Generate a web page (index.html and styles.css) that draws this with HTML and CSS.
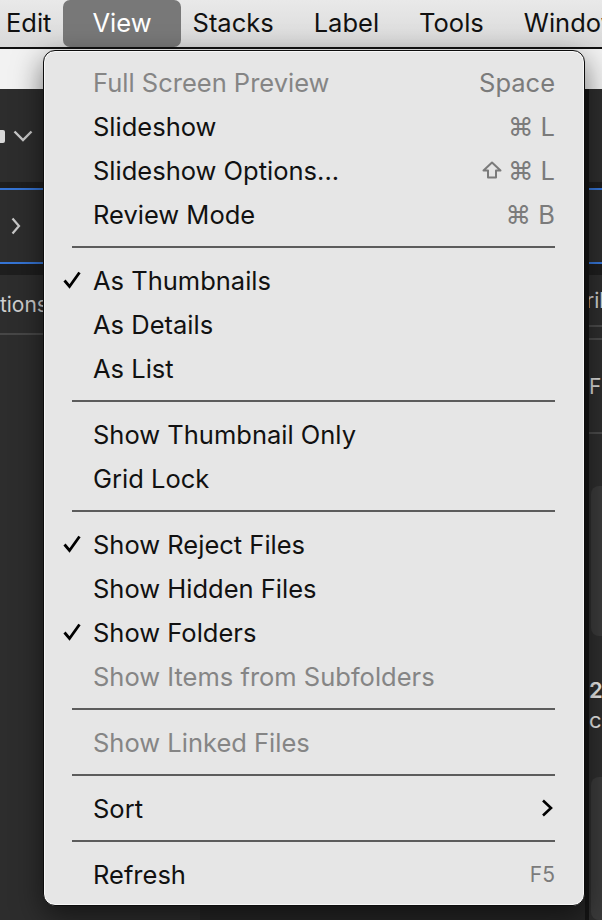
FILE: index.html
```html
<!DOCTYPE html>
<html>
<head>
<meta charset="utf-8">
<link rel="stylesheet" href="styles.css">
</head>
<body>
<div class="menubar">
  <span class="mb-item">Edit</span>
  <span class="mb-item active">View</span>
  <span class="mb-item">Stacks</span>
  <span class="mb-item">Label</span>
  <span class="mb-item">Tools</span>
  <span class="mb-item">Window</span>
</div>
<div class="window">
  <div class="toolbar"></div>
  <div class="panes">
    <div class="pane left">
      <div class="p-head">
        <span class="p-glyph"></span>
        <svg class="p-down" width="20" height="12" viewBox="0 0 20 12"><path d="M1.5 1.5 L10 10 L18.5 1.5" fill="none" stroke="#c8c8c8" stroke-width="2.4"/></svg>
      </div>
      <div class="p-band blue-b"></div>
      <div class="p-row">
        <svg class="p-right" width="10" height="18" viewBox="0 0 10 18"><path d="M1.5 1.5 L8 9 L1.5 16.5" fill="none" stroke="#c8c8c8" stroke-width="2.2"/></svg>
      </div>
      <div class="p-band blue-t"></div>
      <div class="p-label">Options</div>
      <div class="p-rest"></div>
    </div>
    <div class="pane center"></div>
    <div class="pane right">
      <div class="r-head"></div>
      <div class="p-band blue-b"></div>
      <div class="r-row"></div>
      <div class="p-band blue-t"></div>
      <div class="r-label">ril</div>
      <div class="r-gap"></div>
      <div class="r-label2">Fil</div>
      <div class="r-space1"></div>
      <div class="r-card c1"></div>
      <div class="r-info">
        <span class="r-num">2</span>
        <span class="r-sub">c</span>
      </div>
      <div class="r-card c2"></div>
    </div>
  </div>
</div>

<div class="menu">
  <div class="mi disabled"><span class="chk"></span><span class="lbl">Full Screen Preview</span><span class="sc">Space</span></div>
  <div class="mi"><span class="chk"></span><span class="lbl">Slideshow</span><span class="sc">⌘ L</span></div>
  <div class="mi"><span class="chk"></span><span class="lbl">Slideshow Options...</span><span class="sc"><svg class="shift" width="20" height="18" viewBox="0 0 20 18"><path d="M10 1.5 L18.5 9.5 L14 9.5 L14 16.5 L6 16.5 L6 9.5 L1.5 9.5 Z" fill="none" stroke="#7b7b7b" stroke-width="2" stroke-linejoin="round"/></svg>⌘ L</span></div>
  <div class="mi"><span class="chk"></span><span class="lbl">Review Mode</span><span class="sc">⌘ B</span></div>
  <div class="sep"></div>
  <div class="mi"><span class="chk"><svg width="18" height="18" viewBox="0 0 18 18"><path d="M1.5 9.5 L6.5 15.5 L16.5 1.5" fill="none" stroke="#000" stroke-width="2.8"/></svg></span><span class="lbl">As Thumbnails</span></div>
  <div class="mi"><span class="chk"></span><span class="lbl">As Details</span></div>
  <div class="mi"><span class="chk"></span><span class="lbl">As List</span></div>
  <div class="sep"></div>
  <div class="mi"><span class="chk"></span><span class="lbl">Show Thumbnail Only</span></div>
  <div class="mi"><span class="chk"></span><span class="lbl">Grid Lock</span></div>
  <div class="sep"></div>
  <div class="mi"><span class="chk"><svg width="18" height="18" viewBox="0 0 18 18"><path d="M1.5 9.5 L6.5 15.5 L16.5 1.5" fill="none" stroke="#000" stroke-width="2.8"/></svg></span><span class="lbl">Show Reject Files</span></div>
  <div class="mi"><span class="chk"></span><span class="lbl">Show Hidden Files</span></div>
  <div class="mi"><span class="chk"><svg width="18" height="18" viewBox="0 0 18 18"><path d="M1.5 9.5 L6.5 15.5 L16.5 1.5" fill="none" stroke="#000" stroke-width="2.8"/></svg></span><span class="lbl">Show Folders</span></div>
  <div class="mi disabled"><span class="chk"></span><span class="lbl">Show Items from Subfolders</span></div>
  <div class="sep"></div>
  <div class="mi disabled"><span class="chk"></span><span class="lbl">Show Linked Files</span></div>
  <div class="sep"></div>
  <div class="mi"><span class="chk"></span><span class="lbl">Sort</span><span class="sc sub"><svg width="12" height="18" viewBox="0 0 12 18"><path d="M2 1.5 L10 9 L2 16.5" fill="none" stroke="#000" stroke-width="2.6"/></svg></span></div>
  <div class="sep"></div>
  <div class="mi"><span class="chk"></span><span class="lbl">Refresh</span><span class="sc small">F5</span></div>
</div>
</body>
</html>
```

FILE: styles.css
```css
* { box-sizing: border-box; }
html, body { margin: 0; padding: 0; }
body {
  width: 602px;
  height: 920px;
  overflow: hidden;
  background: #2c2c2c;
  font-family: Inter, "Liberation Sans", sans-serif;
  position: relative;
}

/* ---------- macOS menu bar ---------- */
.menubar {
  height: 49px;
  width: 617px;
  display: flex;
  align-items: stretch;
  margin-left: -14px;
  overflow: hidden;
  background: linear-gradient(#e9e9e9, #d9d9d9);
  border-bottom: 2px solid #111;
  white-space: nowrap;
}
.mb-item {
  display: flex;
  align-items: center;
  padding: 0 20px 2px;
  font-size: 25.5px;
  color: #111;
}
.mb-item.active {
  background: #787878;
  color: #fff;
  border-radius: 7px;
  padding: 0 29px 2px;
  margin: 0 -8px;
}

/* ---------- background app window ---------- */
.window { height: 871px; display: flex; flex-direction: column; }
.toolbar { height: 40px; background: #f2f2f2; }
.panes { flex: 1; display: flex; }
.pane { display: flex; flex-direction: column; }
.pane.left { width: 200px; background: #2d2d2d; }
.pane.center { flex: 1; background: #262626; }
.pane.right { width: 17px; background: #2d2d2d; border-left: 4px solid #151515; overflow: hidden; }

.p-head { height: 93px; display: flex; align-items: center; gap: 4px; padding-top: 1px; }
.p-glyph { width: 5px; height: 13px; background: #d8d8d8; border-radius: 0 2px 2px 0; }
.p-down { margin-left: 4px; }
.p-band { height: 8px; background: #1e1e1e; }
.p-band.blue-b { border-bottom: 2px solid #3574d4; }
.p-band.blue-t { height: 13px; border-top: 2px solid #3574d4; }
.p-row { height: 72px; display: flex; align-items: center; padding-left: 11px; }
.p-label {
  height: 60px;
  display: flex;
  align-items: center;
  margin-left: -29px;
  font-size: 21px;
  color: #cfcfcf;
  border-bottom: 2px solid #474747;
}
.p-rest { flex: 1; }

.r-head { height: 93px; }
.r-row { height: 72px; }
.r-label {
  height: 52px;
  display: flex; align-items: center;
  margin-left: -3px;
  font-size: 21px; color: #d0d0d0;
  border-bottom: 2px solid #4a4a4a;
}
.r-gap { height: 13px; border-bottom: 2px solid #4a4a4a; }
.r-label2 {
  height: 94px;
  display: flex; align-items: center;
  font-size: 21px; color: #d8d8d8;
  border-bottom: 2px solid #4a4a4a;
}
.r-space1 { height: 52px; }
.r-card { background: #3a3a3a; border-radius: 8px 0 0 8px; margin-left: 2px; }
.r-card.c1 { height: 150px; }
.r-card.c2 { flex: 1; }
.r-info {
  height: 141px;
  display: flex; flex-direction: column; justify-content: center;
  font-size: 22px; color: #e6e6e6; line-height: 30px;
  padding-bottom: 4px;
}
.r-num { font-weight: 600; }

/* ---------- dropdown menu ---------- */
.menu {
  position: absolute;
  left: 43px;
  top: 50px;
  width: 542px;
  height: 856px;
  background: #e6e6e6;
  border: 1px solid #0d0d0d;
  border-radius: 12px;
  box-shadow: inset 0 0 0 1px #f7f7f7, 0 10px 30px rgba(0,0,0,0.55);
  padding: 9px 0 10px;
}
.mi {
  height: 44px;
  display: flex;
  align-items: center;
  padding: 0 29px 0 19px;
  font-size: 25.5px;
  color: #111;
  white-space: nowrap;
}
.mi.disabled { color: #858585; }
.chk { width: 30px; display: flex; align-items: center; }
.chk svg { display: block; }
.lbl { flex: 1; }
.sc {
  color: #7b7b7b;
  display: flex;
  align-items: center;
  gap: 4px;
}
.sc.small { font-size: 21px; }
.sc.sub { padding-right: 2px; }
.shift { margin-right: 2px; }
.sep {
  height: 22px;
  display: flex;
  align-items: center;
  margin: 0 29px 0 28px;
}
.sep::after {
  content: "";
  flex: 1;
  height: 2px;
  background: #5c5c5c;
}
```
